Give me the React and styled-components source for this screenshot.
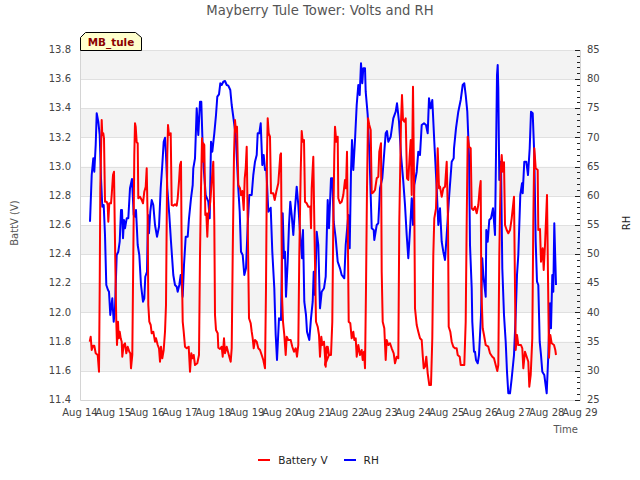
import React from "react";
import styled, { createGlobalStyle } from "styled-components";

const Global = createGlobalStyle`
  html, body { margin: 0; padding: 0; background: #fff; }
  body { font-family: "DejaVu Sans", sans-serif; }
`;

const Page = styled.div`
  width: 640px;
  height: 480px;
  display: flex;
  flex-direction: column;
  align-items: stretch;
  overflow: hidden;
`;
const Title = styled.h1`
  margin: 0;
  height: 22px;
  line-height: 22px;
  font-size: 13.2px;
  font-weight: 400;
  text-align: center;
  color: #555;
`;
const ChartArea = styled.div`
  position: relative;
  height: 428px;
`;
const Plot = styled.svg`
  display: block;
  width: 640px;
  height: 428px;
`;
const Tag = styled.div`
  position: absolute;
  left: 80px;
  top: 9px;
  width: 62px;
  height: 20px;
  display: flex;
  align-items: center;
  justify-content: center;
  font-size: 10.4px;
  font-weight: 700;
  color: #8b0000;
  svg { position: absolute; inset: 0; }
  span { position: relative; padding-top: 2px; }
`;
const Legend = styled.div`
  display: flex;
  justify-content: center;
  align-items: center;
  gap: 8px;
  height: 20px;
  padding-right: 3px;
  font-size: 10.5px;
  color: #222;
`;
const Swatch = styled.i`
  display: block;
  width: 12px;
  height: 2px;
  background: ${(p) => p.$color};
  margin-left: ${(p) => (p.$gap ? "8px" : "0")};
`;
const Band = styled.rect`fill: #f3f3f3;`;
const Grid = styled.line`stroke: #e0e0e0; stroke-width: 1;`;
const Frame = styled.path`fill: none; stroke: #d4d4d4; stroke-width: 1;`;
const Tick = styled.line`stroke: #222; stroke-width: 1;`;
const Label = styled.text`
  font-size: 10px;
  fill: ${(p) => p.$color || "#444"};
  font-family: "DejaVu Sans", sans-serif;
`;
const Series = styled.polyline`
  fill: none;
  stroke: ${(p) => p.$color};
  stroke-width: 2;
  stroke-linejoin: round;
`;

const TOP = 28; // chart-area y offset of plot top (y=50 on page)
const off = 22;
const seg = (ox, pts) => pts.map(([x, y]) => [ox + x / 3, 55 + y / 3 - off]);

const red = [
  ...seg(85, [[14,860],[17,845],[20,885],[24,872],[28,872],[32,895],[38,900],[42,950],[44,700],[46,400],[50,195],[52,240],[55,235],[57,250],[60,440],[65,440],[68,450],[70,500],[73,445],[78,445],[80,420],[84,360],[87,350],[89,500],[92,700],[94,800],[96,870],[99,800],[101,850],[104,830],[107,850],[110,860],[112,905],[116,870],[120,865],[124,895],[128,875],[133,890],[136,895],[138,940],[142,900],[145,600],[148,300],[150,205],[152,215],[155,262],[158,265],[160,430],[165,425],[170,435],[174,445],[178,410],[182,395],[185,340],[188,500],[190,750],[193,800],[197,810],[200,835],[205,830],[210,860],[213,850],[218,870],[222,880],[225,920],[228,875],[232,910],[236,885],[240,830],[243,750],[245,500],[247,300],[249,210],[252,240],[257,235],[260,450],[265,452],[270,448],[275,452],[278,430],[282,380],[285,330],[288,320],[290,600],[293,800],[296,830],[300,875],[305,880],[311,875],[315,950],[319,895],[322,910],[326,900],[330,930],[337,925],[342,900],[345,600],[348,400],[351,250],[353,320],[355,265],[358,270],[361,480],[364,475],[367,545],[370,475]]),
  ...seg(205, [[12,470],[16,440],[20,380],[25,320],[28,500],[30,780],[33,825],[38,835],[40,878],[45,882],[50,875],[53,905],[57,850],[60,895],[65,875],[69,890],[73,905],[77,920],[80,880],[83,600],[87,300],[90,195],[93,230],[96,215],[100,390],[105,400],[108,420],[112,408],[116,465],[119,370],[122,340],[125,275],[128,500],[132,790],[137,805],[140,830],[143,850],[146,880],[150,855],[155,860],[160,880],[165,885],[170,900],[175,915],[180,940],[183,700],[186,300],[188,190],[191,235],[195,245],[198,415],[205,415],[209,435],[214,410],[220,385],[226,300],[228,295],[231,720],[234,800],[238,840],[242,900],[245,845],[250,855],[257,855],[262,875],[267,890],[272,880],[276,905],[280,870],[283,600],[287,350],[290,228],[293,260],[297,255],[300,440],[305,445],[310,455],[316,455],[318,520],[320,400],[325,305],[328,500],[333,800],[338,815],[342,840],[345,905],[349,845],[352,870],[357,860],[362,935],[365,875],[372,900]]),
  ...seg(325, [[0,930],[3,880],[8,875],[12,900],[18,900],[22,800],[25,500],[28,300],[30,215],[34,260],[38,245],[40,430],[45,445],[50,440],[55,420],[60,375],[63,400],[66,290],[68,500],[71,800],[76,805],[80,850],[85,830],[88,855],[92,850],[95,905],[100,870],[105,900],[110,885],[113,915],[117,890],[120,940],[123,700],[126,400],[129,190],[133,210],[137,225],[140,415],[145,412],[150,405],[155,370],[160,365],[163,290],[168,265],[170,650],[173,800],[178,820],[182,915],[185,855],[190,870],[195,865],[200,880],[206,895],[210,925],[215,905],[220,910],[223,500],[228,200],[231,120],[234,195],[238,200],[242,190],[246,370],[250,375],[254,300],[257,255],[260,420],[264,95],[268,450],[270,760],[275,810],[280,830],[285,850],[290,855],[293,900],[296,940],[300,935],[304,905],[308,955],[313,990],[318,990],[322,850],[325,600],[328,490],[333,460],[338,280],[342,400],[345,395],[350,425],[355,400],[360,395],[365,320]]),
  ...seg(445, [[9,500],[11,815],[16,830],[20,860],[25,875],[30,880],[35,880],[38,900],[44,905],[47,930],[52,930],[58,930],[62,800],[65,500],[68,245],[72,275],[77,280],[80,460],[85,465],[90,455],[95,475],[100,450],[104,400],[107,378],[109,700],[113,820],[117,840],[122,870],[130,875],[135,895],[142,905],[147,910],[152,930],[157,948],[160,930],[163,600],[167,350],[170,300],[173,350],[177,322],[180,510],[185,525],[190,535],[195,525],[200,490],[207,425],[210,700],[212,885],[216,840],[220,870],[228,870],[232,880],[235,940],[240,890],[245,905],[250,920],[253,995],[257,960],[262,850],[265,500],[268,280],[272,340],[278,345],[280,525],[285,522],[288,620],[293,580],[296,645],[300,570],[306,420],[312,908],[316,840],[320,865],[327,870],[331,885],[333,900]]),
];

const blue = [
  ...seg(85, [[15,500],[20,360],[25,310],[28,350],[32,270],[35,175],[40,200],[44,240],[48,370],[52,455],[56,450],[60,540],[64,690],[69,705],[72,710],[76,780],[82,730],[86,800],[90,760],[95,600],[100,590],[104,560],[108,465],[111,465],[114,550],[117,495],[120,520],[125,490],[130,490],[135,400],[141,372],[146,480],[150,485],[153,465],[158,570],[163,600],[168,690],[174,740],[178,730],[181,665],[186,650],[189,480],[192,535],[196,470],[200,435],[205,450],[210,510],[216,545],[222,515],[227,400],[232,330],[236,260],[240,248],[243,300],[247,400],[253,480],[258,560],[265,660],[270,690],[275,695],[278,710],[283,690],[287,660],[293,725],[297,630],[302,545],[308,545],[312,490],[318,430],[323,390],[325,340],[330,310],[335,160],[340,240],[345,140],[349,140],[352,240],[356,340],[362,420],[366,430]]),
  ...seg(205, [[10,440],[14,490],[18,260],[22,290],[28,235],[33,180],[37,125],[42,118],[46,85],[50,90],[55,80],[60,78],[65,90],[70,92],[76,105],[80,150],[86,195],[92,240],[96,320],[100,400],[104,470],[108,590],[113,600],[118,660],[123,640],[128,510],[133,420],[140,420],[145,360],[150,320],[155,300],[158,235],[163,235],[167,205],[172,330],[176,300],[180,345],[184,340],[190,470],[197,458],[202,590],[208,700],[212,840],[216,915],[222,790],[228,795],[233,475],[237,610],[240,590],[243,725],[248,620],[252,510],[256,440],[260,480],[265,540],[270,460],[275,395],[280,450],[285,530],[291,610],[294,525],[298,740],[303,780],[306,830],[313,855],[318,790],[323,740],[326,650],[330,720],[335,530],[340,570],[345,760],[350,710],[357,700],[362,665],[368,435],[372,520]]),
  ...seg(325, [[18,370],[22,370],[26,500],[32,550],[38,620],[45,640],[50,660],[58,670],[62,570],[70,480],[74,580],[78,350],[81,255],[85,345],[90,255],[95,150],[100,90],[104,120],[108,25],[112,85],[115,40],[120,40],[122,110],[128,180],[134,320],[140,520],[146,525],[148,555],[155,510],[160,505],[165,400],[172,370],[178,290],[182,235],[186,228],[190,260],[197,245],[205,190],[212,170],[216,145],[222,200],[228,300],[235,380],[240,450],[245,540],[250,610],[256,510],[260,430],[264,510],[268,390],[275,350],[280,290],[285,300],[290,210],[297,205],[303,210],[308,235],[312,130],[317,160],[322,135],[328,260],[335,400],[340,510],[345,460],[350,560],[355,590],[360,615]]),
  ...seg(445, [[5,540],[12,430],[20,320],[26,310],[27,280],[33,220],[40,170],[47,135],[53,90],[58,85],[62,120],[67,170],[72,300],[75,570],[80,700],[82,800],[87,890],[90,890],[93,915],[98,925],[102,900],[108,780],[112,610],[115,660],[122,725],[124,525],[128,560],[133,495],[138,490],[144,460],[150,540],[153,300],[156,60],[158,30],[160,100],[163,375],[168,320],[172,640],[177,780],[182,860],[186,950],[190,1015],[195,1015],[200,970],[207,900],[212,780],[216,660],[220,600],[226,420],[231,385],[233,415],[238,320],[244,320],[249,360],[254,280],[258,170],[263,175],[268,300],[272,560],[276,680],[280,690],[284,860],[288,900],[292,950],[298,960],[305,1015],[310,900],[315,745],[318,820],[322,660],[325,710],[328,505],[333,690]]),
];

const toPoints = (a) => a.map(([x, y]) => `${x.toFixed(1)},${y.toFixed(1)}`).join(" ");
const STEP = 350 / 12;
const yAt = (i) => TOP + i * STEP;
const snap = (y) => Math.floor(y + 0.4) + 0.5;
const leftLabels = ["13.8","13.6","13.4","13.2","13.0","12.8","12.6","12.4","12.2","12.0","11.8","11.6","11.4"];
const rightLabels = [85, 80, 75, 70, 65, 60, 55, 50, 45, 40, 35, 30, 25];
const days = Array.from({ length: 16 }, (_, i) => 14 + i);
const minorTicks = Array.from({ length: 61 }, (_, i) => i).filter((i) => i % 5 !== 0);

export default function App() {
  return (
    <Page>
      <Global />
      <Title>Mayberry Tule Tower: Volts and RH</Title>
      <ChartArea>
        <Plot viewBox="0 0 640 428">
          {leftLabels.map((_, i) =>
            i % 2 === 0 && i < 12 ? <Band key={i} x="80" y={yAt(i)} width="500" height={STEP} /> : null
          )}
          {leftLabels.slice(1, 12).map((_, i) => (
            <Grid key={i} x1="80" x2="580" y1={snap(yAt(i + 1))} y2={snap(yAt(i + 1))} />
          ))}
          <Grid x1="80" x2="580" y1="28.5" y2="28.5" />
          <Frame d="M80.5 28V378.5H580.5V28" />
          {rightLabels.map((_, i) => (
            <Tick key={i} x1="575" x2="580" y1={snap(yAt(i))} y2={snap(yAt(i))} />
          ))}
          {minorTicks.map((i) => {
            const y = snap(TOP + (i * 350) / 60);
            return <Tick key={i} x1="577" x2="580" y1={y} y2={y} />;
          })}
          <Series $color="#0000ff" points={toPoints(blue)} />
          <Series $color="#ff0000" points={toPoints(red)} />
          {leftLabels.map((t, i) => (
            <Label key={t} x="71" y={yAt(i) + 3} textAnchor="end">{t}</Label>
          ))}
          {rightLabels.map((t, i) => (
            <Label key={t} x="587" y={yAt(i) + 3}>{t}</Label>
          ))}
          {days.map((d, i) => (
            <Label key={d} x={80 + (i * 500) / 15} y="394" textAnchor="middle">{`Aug ${d}`}</Label>
          ))}
          <Label x="578" y="411" textAnchor="end" $color="#555">Time</Label>
          <Label transform="translate(18 201) rotate(-90)" textAnchor="middle" $color="#555">BattV (V)</Label>
          <Label transform="translate(630 201) rotate(-90)" textAnchor="middle" $color="#222">RH</Label>
        </Plot>
        <Tag>
          <svg width="62" height="20" viewBox="0 0 62 20">
            <path d="M.5 19.5V6.5L5.5 1.5H55.5L61.5 6.5V19.5Z" fill="#ffffcc" stroke="#000" />
          </svg>
          <span>MB_tule</span>
        </Tag>
      </ChartArea>
      <Legend>
        <Swatch $color="#ff0000" />
        <span>Battery V</span>
        <Swatch $color="#0000ff" $gap />
        <span>RH</span>
      </Legend>
    </Page>
  );
}
